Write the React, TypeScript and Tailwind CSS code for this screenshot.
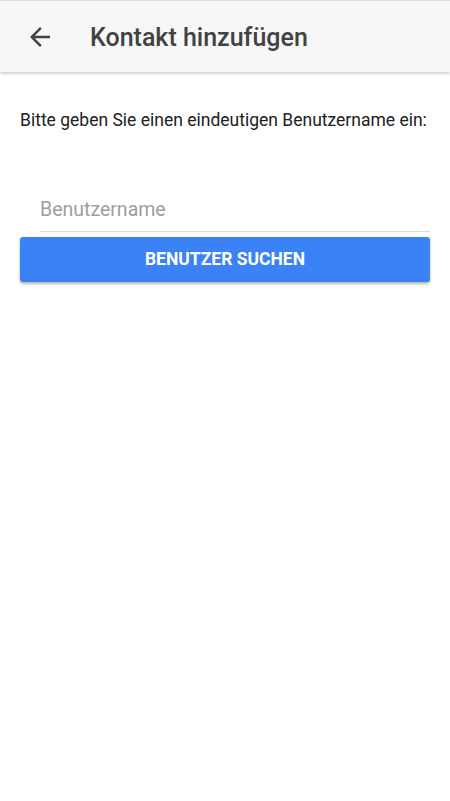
export default function App() {
  return (
    <div className="min-h-[801px] w-[450px] bg-white font-['Roboto',sans-serif]">
      <header className="flex h-[72px] items-center border-t border-[#dddddd] bg-[#f7f7f7] shadow-[0_2px_3px_rgba(0,0,0,0.18)]">
        <button type="button" className="ml-[25px] flex h-[30px] w-[30px] items-center justify-center text-[#424242]">
          <svg viewBox="0 0 24 24" className="h-[30px] w-[30px]" fill="currentColor">
            <path d="M20 11H7.83l5.59-5.59L12 4l-8 8 8 8 1.41-1.41L7.83 13H20v-2z" />
          </svg>
        </button>
        <h1 className="ml-[35px] mt-[2px] text-[25px] font-medium text-[#424242]">Kontakt hinzufügen</h1>
      </header>

      <main className="px-5">
        <p className="mt-[37px] text-[17.5px] leading-[22px] text-[#212121]">
          Bitte geben Sie einen eindeutigen Benutzername ein:
        </p>
        <div className="mt-[57px] pl-5">
          <input
            type="text"
            placeholder="Benutzername"
            className="h-[44px] w-full border-b border-[#dddddd] bg-transparent text-[19.5px] text-[#212121] outline-none placeholder:text-[#9e9e9e]"
          />
        </div>
        <button
          type="button"
          className="mt-[5px] h-[45px] w-full rounded-[3px] bg-[#3b82f6] text-[17.5px] font-bold text-white shadow-[0_2px_3px_rgba(0,0,0,0.3)]"
        >
          BENUTZER SUCHEN
        </button>
      </main>
    </div>
  );
}
